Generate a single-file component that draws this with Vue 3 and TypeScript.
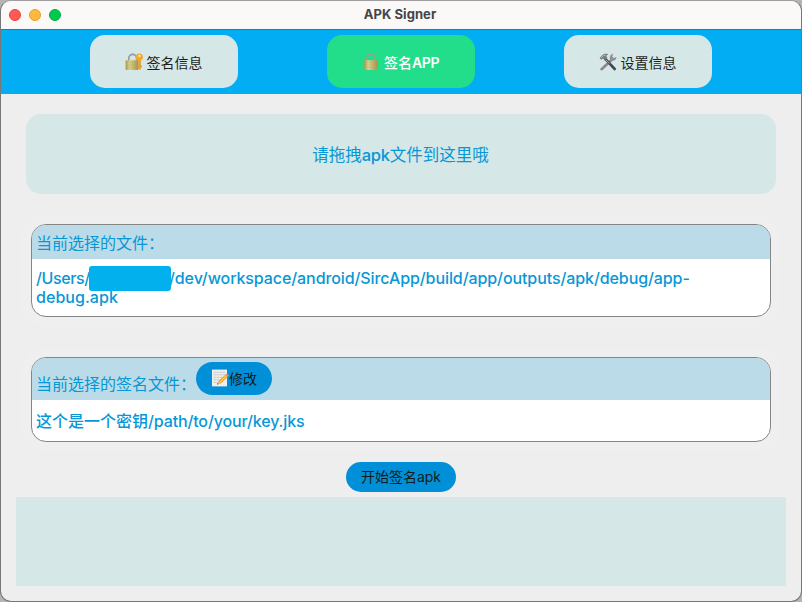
<script setup lang="ts">
interface Tab {
  icon: 'key' | 'lock' | 'tools'
  cjk: string
  latin?: string
  active?: boolean
}

const tabs: Tab[] = [
  { icon: 'key', cjk: '签名信息' },
  { icon: 'lock', cjk: '签名', latin: 'APP', active: true },
  { icon: 'tools', cjk: '设置信息' },
]
</script>

<template>
  <div class="window">
    <header class="titlebar">
      <div class="lights"><i class="red"></i><i class="yellow"></i><i class="green"></i></div>
      <span class="title">APK Signer</span>
    </header>
    <nav class="tabs">
      <button v-for="tab in tabs" :key="tab.icon" class="tab" :class="{ active: tab.active }">
        <svg v-if="tab.icon !== 'tools'" class="icon" viewBox="0 0 18 18">
          <defs>
            <linearGradient :id="'brass-' + tab.icon" x1="0" x2="1" y1="0" y2="0">
              <stop offset="0" stop-color="#a99a4c" />
              <stop offset=".3" stop-color="#dccf8e" />
              <stop offset="1" stop-color="#a8964a" />
            </linearGradient>
          </defs>
          <g v-if="tab.icon === 'key'">
            <path d="M3.8 8V5.3a3.9 3.9 0 0 1 7.8 0V8" fill="none" stroke="#8c9aa3" stroke-width="1.6" />
            <path d="M14.6 6v10.4" stroke="#e9a02c" stroke-width="2.6" />
            <path d="M15 12.5h2v2h-2z" fill="#e9a02c" />
            <circle cx="14.3" cy="4.2" r="3.6" fill="#f2a732" />
            <circle cx="14.4" cy="2.9" r="1.1" fill="#fff0cf" />
            <rect x=".6" y="7.2" width="12.8" height="9.8" rx=".8" fill="url(#brass-key)" />
            <path d="M1 9.4h12M1 12h12M1 14.6h12" stroke="#8e7c35" stroke-width=".4" opacity=".3" />
          </g>
          <g v-else>
            <path d="M4.9 8V5.3a4.1 4.1 0 0 1 8.2 0V8" fill="none" stroke="#95a58c" stroke-width="1.7" />
            <rect x="2.2" y="7.2" width="13.4" height="9.8" rx=".8" fill="url(#brass-lock)" />
            <path d="M2.5 9.4h12.8M2.5 12h12.8M2.5 14.6h12.8" stroke="#8e7c35" stroke-width=".4" opacity=".3" />
          </g>
        </svg>
        <svg v-else class="icon" viewBox="0 0 18 18">
          <path d="M12.2 7.2 2.6 16.2" stroke="#85888f" stroke-width="2.6" stroke-linecap="round" />
          <path d="M11 6.2c-.8-2.6.6-5 3.2-5.4l-.9 2.7 1.3 1.4 2.8-.9c.1 2.6-2.2 4.4-4.8 3.7z" fill="#8d9097" />
          <path d="M6.5 6.2 15.7 16" stroke="#44474d" stroke-width="2.6" stroke-linecap="round" />
          <path d="M.6 4.9 3.5 2C5.2.5 7.2.6 9.3 1.2L7.1 3l1.4 1.8-2.7 2.6-2-1.8-1.6 1.2z" fill="#777b82" />
          <path d="m2.3 4.7 2.4-2.2 2-.4M7 7l3.4 3.6" stroke="#c9ccd0" stroke-width=".8" fill="none" />
        </svg>
        <span class="tab-text">{{ tab.cjk }}<span v-if="tab.latin" class="tab-latin">{{ tab.latin }}</span></span>
      </button>
    </nav>
    <main class="content">
      <section class="drop"><span>请拖拽<span class="drop-latin">apk</span>文件到这里哦</span></section>
      <section class="card file-card">
        <div class="card-head">当前选择的文件：</div>
        <div class="card-body path">
          <div><span class="seg-users">/Users/</span><span class="mask"><i></i></span><span class="seg-path">/dev/workspace/android/SircApp/build/app/outputs/apk/debug/app-</span></div>
          <div class="seg-last">debug.apk</div>
        </div>
      </section>
      <section class="card key-card">
        <div class="card-head">
          <span class="key-label">当前选择的签名文件：</span>
          <button class="edit">
            <svg class="memo" viewBox="0 0 18 18">
              <rect x="1" y=".6" width="15" height="16.8" fill="#efefed" />
              <path d="M2.5 3.3h12M2.5 5.8h12M2.5 8.3h10M2.5 10.8h8M2.5 13.3h5" stroke="#c4c7ca" stroke-width="1" stroke-dasharray="2.5 .5" />
              <path d="m6.2 15.4 1.2-3.3 7-6.5 2.3 2.4-7 6.4z" fill="#f3ac2d" />
              <path d="m8.2 13.7 7.2-6.8" stroke="#ffd86a" stroke-width=".9" />
              <path d="m14.4 5.6 1.2-1.1q1.5-.1 2.2 2.2l-1.1 1.3z" fill="#e88578" />
              <path d="m6.2 15.4 1.2-3.3 2.3 2.3z" fill="#e6c398" />
              <path d="m6.2 15.4.5-1.3.8.9z" fill="#333" />
            </svg>修改
          </button>
        </div>
        <div class="card-body"><div>这个是一个密钥<span class="seg-key">/path/to/your/key.jks</span></div></div>
      </section>
      <button class="start">开始签名<span>apk</span></button>
      <section class="log"></section>
    </main>
  </div>
</template>

<style>
body { background: #b4b4b4; }
</style>

<style scoped>
.window {
  box-sizing: border-box;
  width: 802px;
  height: 602px;
  border: 1px solid #777;
  border-top-color: #a09e9e;
  border-radius: 11px;
  overflow: hidden;
  background: #eee;
  font-family: Inter, "Noto Sans CJK SC", sans-serif;
}
button { border: 0; margin: 0; padding: 0; font-family: inherit; }
.titlebar {
  position: relative;
  height: 28px;
  display: flex;
  align-items: center;
  justify-content: center;
  background: #fbf9f8;
}
.lights { position: absolute; left: 8px; top: 8px; display: flex; gap: 8px; }
.lights i { box-sizing: border-box; width: 12px; height: 12px; border-radius: 50%; }
.red { background: #ff5a54; border: 1px solid #e2443f; }
.yellow { background: #ffb93e; border: 1px solid #e09e30; }
.green { background: #00c94f; border: 1px solid #00ac3b; }
.title { font-size: 13px; font-weight: 700; line-height: 26px; padding: 0 2px 2px 0; letter-spacing: .06px; color: #464545; }
.tabs {
  box-sizing: border-box;
  height: 65px;
  border-top: 1px solid #0786bf;
  padding-bottom: 1px;
  background: #02adf4;
  display: flex;
  align-items: center;
  justify-content: space-evenly;
}
.tab {
  width: 148px;
  height: 53px;
  border-radius: 15px;
  background: #d5e7e6;
  color: #1c1e1e;
  display: flex;
  align-items: center;
  justify-content: center;
  gap: 4px;
  font-size: 14px;
  line-height: 20px;
}
.tab.active { background: #22dd8a; color: #fff; font-weight: 500; }
.tab-latin { font-weight: 600; letter-spacing: -.4px; }
.icon { width: 18px; height: 18px; flex: none; margin-left: -1px; }
.tab-text { white-space: nowrap; padding-top: 3px; }
.content { display: flex; flex-direction: column; align-items: center; padding-top: 20px; }
.drop {
  box-sizing: border-box;
  width: 750px;
  height: 80px;
  padding: 0 1px 1px 0;
  border-radius: 15px;
  background: #d5e7e6;
  color: #0797d6;
  font-size: 16.5px;
  display: flex;
  align-items: center;
  justify-content: center;
}
.drop-latin { font-weight: 500; letter-spacing: -.2px; }
.card {
  box-sizing: border-box;
  width: 740px;
  border: 1px solid #858585;
  border-radius: 15px;
  overflow: hidden;
  background: #fff;
  color: #0797d6;
  font-size: 16px;
  box-shadow: 0 0 0 10px #efefef;
}
.file-card { height: 93px; margin-top: 30px; }
.key-card { height: 85px; margin-top: 40px; }
.card-head {
  box-sizing: border-box;
  height: 34px;
  padding: 0 4px;
  background: #bbdbe8;
  display: flex;
  align-items: center;
}
.key-card .card-head { height: 42px; padding-bottom: 2px; }
.key-label { width: 160px; padding-top: 10px; white-space: nowrap; }
.card-body { padding: 0 4px; font-weight: 500; white-space: nowrap; }
.key-card .card-body { line-height: 42px; }
.seg-key { letter-spacing: -.14px; }
.path { padding-top: 10px; line-height: 19px; }
.seg-users { display: inline-block; width: 53px; letter-spacing: -.4px; }
.seg-path { display: inline-block; margin-left: -1px; letter-spacing: -.09px; }
.seg-last { letter-spacing: .05px; }
.mask { position: relative; display: inline-block; width: 81px; }
.mask i {
  position: absolute;
  left: 0;
  top: -18px;
  width: 82px;
  height: 25px;
  border-radius: 3px;
  background: #02b0ee;
}
.edit {
  width: 76px;
  height: 33px;
  border-radius: 17px;
  background: #018fd7;
  color: #131c20;
  font-size: 14px;
  display: flex;
  align-items: center;
  justify-content: center;
}
.memo { width: 18px; height: 18px; }
.start {
  width: 110px;
  height: 30px;
  margin-top: 20px;
  border-radius: 15px;
  background: #018fd7;
  color: #131c20;
  font-size: 14px;
  line-height: 30px;
}
.log { width: 770px; height: 89px; margin-top: 5px; background: #d5e7e6; }
</style>
